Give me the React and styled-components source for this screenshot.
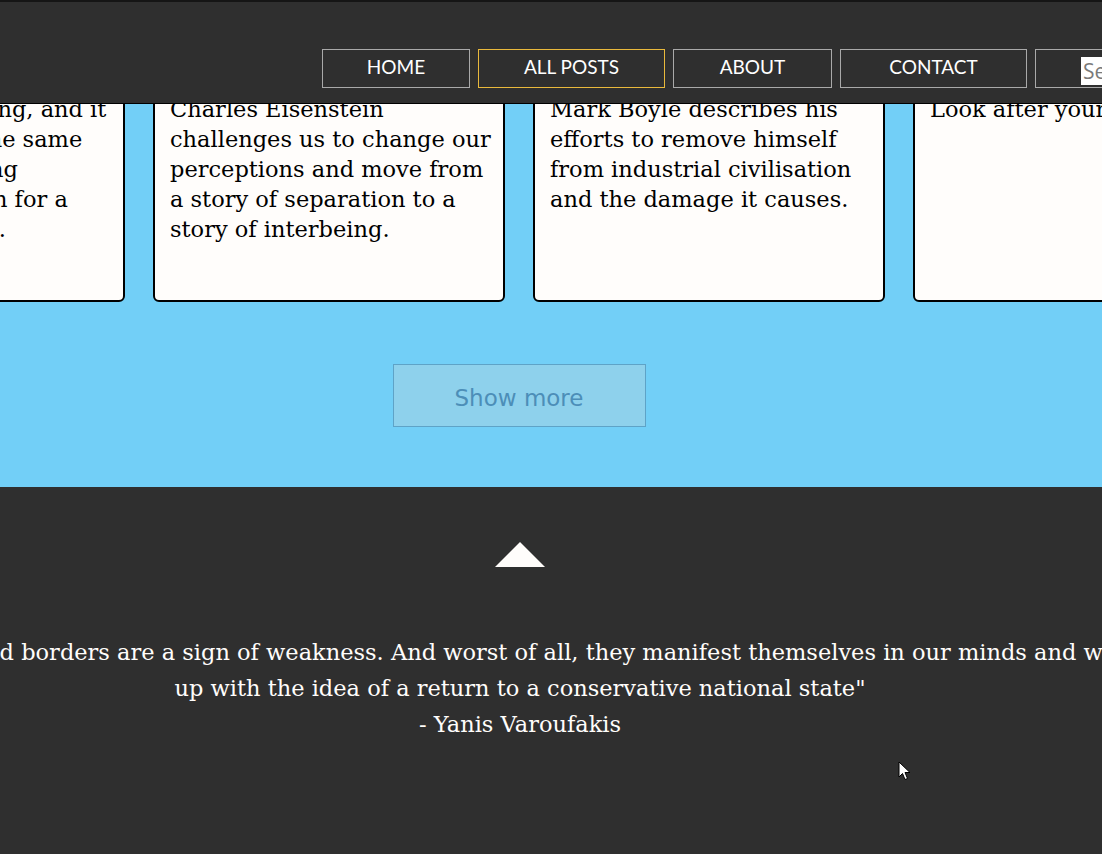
import React from "react";
import styled, { createGlobalStyle } from "styled-components";

const Global = createGlobalStyle`
  html, body { margin: 0; padding: 0; }
  body {
    background: #2f2f2f;
    overflow: hidden;
    width: 1102px;
    height: 854px;
  }
  #root { position: relative; height: 854px; overflow: hidden; }
`;

const Header = styled.header`
  position: fixed;
  top: 0;
  left: 0;
  right: 0;
  z-index: 10;
  box-sizing: border-box;
  height: 104px;
  background: #2f2f2f;
  border-top: 2px solid #151515;
  border-bottom: 1px solid #000;
  padding: 47px 0 0 322px;
  display: flex;
  gap: 8px;
  white-space: nowrap;
  overflow: hidden;
`;

const NavButton = styled.a`
  box-sizing: border-box;
  flex: none;
  width: ${(p) => p.$w}px;
  height: 39px;
  border: 1px solid ${(p) => (p.$active ? "#e9b93c" : "#a9a9a9")};
  color: #fff;
  font-family: Lato, "Open Sans", sans-serif;
  font-size: 19px;
  display: flex;
  align-items: center;
  justify-content: center;
  padding-bottom: 4px;
  text-decoration: none;
`;

const SearchBox = styled.div`
  box-sizing: border-box;
  flex: none;
  width: 140px;
  height: 39px;
  border: 1px solid #a9a9a9;
  padding: 7px 0 0 45px;
`;

const SearchInput = styled.input`
  box-sizing: border-box;
  width: 100px;
  height: 28px;
  border: none;
  outline: none;
  margin: 0;
  padding: 0 2px;
  background: #fff;
  font-family: "Open Sans", sans-serif;
  font-size: 21px;
  &::placeholder { color: #7a7a7a; }
`;

const Blue = styled.section`
  background: #72cff7;
  height: 487px;
`;

const Column = styled.div`
  width: 1038px;
  display: flex;
  flex-direction: column;
  align-items: center;
`;

const CardRow = styled.div`
  display: flex;
  justify-content: center;
  width: 1038px;
  gap: 28px;
`;

const Card = styled.article`
  box-sizing: border-box;
  flex: none;
  width: 352px;
  height: 302px;
  background: #fffdfb;
  border: 2px solid #000;
  border-radius: 6px;
  padding: 92px 15px 0 15px;
  font-family: "DejaVu Serif", serif;
  font-size: 22.5px;
  line-height: 30px;
  color: #000;
  white-space: nowrap;
  overflow: hidden;
`;

const Line = styled.div``;

const ShowMore = styled.button`
  margin-top: 62px;
  box-sizing: border-box;
  width: 253px;
  height: 63px;
  background: #8ed1ec;
  border: 1px solid #5ea3c7;
  color: #4c8eb8;
  font-family: "DejaVu Sans", sans-serif;
  font-size: 23px;
  padding: 4px 0 0;
`;

const Footer = styled.footer`
  width: 1040px;
  display: flex;
  flex-direction: column;
  align-items: center;
  padding-top: 55px;
`;

const Up = styled.svg`
  display: block;
  width: 50px;
  height: 25px;
`;

const Quote = styled.p`
  flex: none;
  margin: 67px 0 0;
  white-space: nowrap;
  text-align: center;
  color: #fffdfb;
  font-family: "DejaVu Serif", serif;
  font-size: 22.5px;
  line-height: 36px;
`;

const Cursor = styled.svg`
  position: absolute;
  left: 898px;
  top: 761px;
  width: 13px;
  height: 20px;
`;

const cards = [
  ["Life is all-consuming, and it", "has left us all in the same", "craving and longing", "an alternative path for a", "a more kind world."],
  ["Charles Eisenstein", "challenges us to change our", "perceptions and move from", "a story of separation to a", "story of interbeing."],
  ["Mark Boyle describes his", "efforts to remove himself", "from industrial civilisation", "and the damage it causes."],
  ["Look after yourself and others."],
];

export default function App() {
  return (
    <>
      <Global />
      <Header>
        <NavButton $w={148}>HOME</NavButton>
        <NavButton $w={187} $active>ALL POSTS</NavButton>
        <NavButton $w={159}>ABOUT</NavButton>
        <NavButton $w={187}>CONTACT</NavButton>
        <SearchBox>
          <SearchInput placeholder="Search" />
        </SearchBox>
      </Header>
      <Blue>
        <Column>
          <CardRow>
            {cards.map((lines, i) => (
              <Card key={i}>
                {lines.map((l, j) => (
                  <Line key={j}>{l}</Line>
                ))}
              </Card>
            ))}
          </CardRow>
          <ShowMore>Show more</ShowMore>
        </Column>
      </Blue>
      <Footer>
        <Up viewBox="0 0 50 25">
          <polygon points="0,25 25,0 50,25" fill="#fffdfb" />
        </Up>
        <Quote>
          "Fences and borders are a sign of weakness. And worst of all, they manifest themselves in our minds and we end
          <br />
          up with the idea of a return to a conservative national state"
          <br />- Yanis Varoufakis
        </Quote>
      </Footer>
      <Cursor viewBox="0 0 13 20">
        <path d="M1 1 L1 16 L4.5 12.5 L7 18.5 L9.5 17.5 L7 11.5 L12 11.5 Z" fill="#fff" stroke="#000" strokeWidth="1" />
      </Cursor>
    </>
  );
}
